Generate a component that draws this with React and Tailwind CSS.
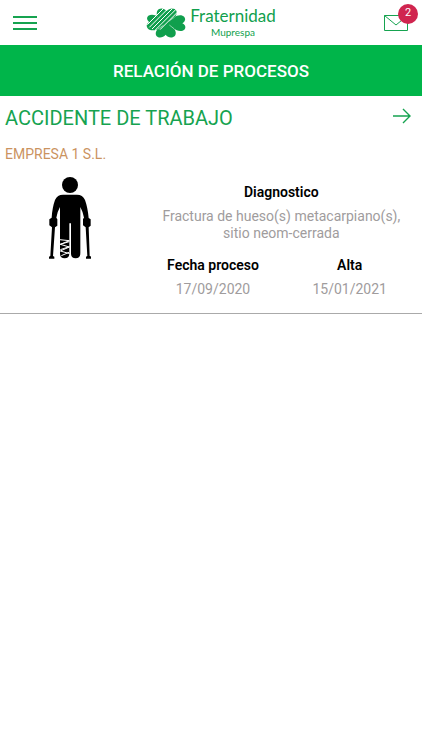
import React, { useState } from 'react';

const processes = [
  {
    id: 1,
    type: 'ACCIDENTE DE TRABAJO',
    company: 'EMPRESA 1 S.L.',
    diagnosis: 'Fractura de hueso(s) metacarpiano(s), sitio neom-cerrada',
    startDate: '17/09/2020',
    endDate: '15/01/2021',
  },
];

const CloverIcon = () => (
  <svg viewBox="0 0 120 90" className="h-[30px] w-10" aria-hidden="true">
    <g fill="#109f4d">
      <path d="M60 47 L38 30 C31 24 31 14 34 8 C39 -1 54 -1 62 9 C70 -1 87 -1 91 8 C94 15 91 23 84 30 Z" />
      <path d="M62 45 L40 60 C31 68 14 70 6 62 C-1 55 2 46 10 42 C2 37 1 28 7 23 C16 17 30 20 40 29 Z" />
      <path d="M58 45 L84 28 C94 20 109 19 115 27 C120 34 117 41 109 46 C118 50 121 59 115 65 C107 72 92 69 82 61 Z" />
      <path d="M60 43 L82 60 C90 67 91 77 87 83 C80 91 66 90 59 80 C51 90 36 91 31 83 C27 76 30 67 38 60 Z" />
    </g>
    <path
      d="M4 50 L52 2 M10 58 L66 2 M18 63 L79 2 M28 66 L92 2 M42 65 L95 12"
      stroke="#fff"
      strokeWidth="3"
      fill="none"
    />
    <path d="M70 39 L86 27 M70 51 L84 62 M52 52 L36 63" stroke="#fff" strokeWidth="1.5" fill="none" />
  </svg>
);

const CrutchesIcon = () => (
  <svg viewBox="0 0 126 246" className="h-[82px] w-[42px]" role="img" aria-label="Accidente de trabajo">
    <circle cx="63" cy="24" r="24" />
    <path d="M42 53 H84 Q101 53 108 69 Q116 91 119 123 L125 127 V146 L119 151 L122 237 L127 239 V245 H111 V239 L115 237 L110 151 L102 145 V126 L105 122 Q102 105 94 90 V228 Q94 244 80 244 Q66 244 66 229 V139 H61 V229 Q61 244 47 244 Q33 244 33 229 V90 Q24 106 22 122 L25 127 V146 L18 151 L12 237 L16 239 V245 H0 V239 L4 237 L9 151 L1 145 V127 L8 122 Q10 91 18 69 Q25 53 42 53Z" />
    <path
      d="M32 188 L61 191 L34 202 L61 210 L34 222 L62 230 M33 202 L61 194 M34 218 L61 209 M37 236 L60 226"
      stroke="#fff"
      strokeWidth="3"
      fill="none"
    />
  </svg>
);

const Header = ({ unread, onMenu }) => (
  <header className="grid h-[45px] grid-cols-3 items-center bg-white">
    <button type="button" onClick={onMenu} aria-label="Menú" className="ml-[13px] w-6 justify-self-start">
      <svg viewBox="0 0 24 16" className="h-4 w-6" stroke="#16a350" strokeWidth="1.8">
        <path d="M0 2H24M0 8H24M0 14H24" />
      </svg>
    </button>
    <div className="flex items-center gap-1 justify-self-center text-[#109f4d]">
      <CloverIcon />
      <div className="flex flex-col items-center pb-0.5 font-[Lato,sans-serif]">
        <span className="text-[17px] leading-5">Fraternidad</span>
        <span className="text-[10px] leading-3">Muprespa</span>
      </div>
    </div>
    <button type="button" aria-label="Mensajes" className="relative mr-[14px] justify-self-end">
      <svg viewBox="0 0 24 16" className="h-4 w-6" fill="none" stroke="#16a350">
        <path d="M.5 .5H23.5V15.5H.5ZM.5 .5L12 10L23.5 .5" />
      </svg>
      <span className="absolute -top-[11px] -right-[10px] flex size-5 items-center justify-center rounded-full bg-[#d0254f] text-[11px] text-white">
        {unread}
      </span>
    </button>
  </header>
);

const labelClass = 'text-sm leading-[18px] font-semibold text-black';
const valueClass = 'text-sm leading-[17px] text-[#a09c9d]';

const ProcessCard = ({ process }) => (
  <article className="border-b border-[#aaaaaa] pb-[15px]">
    <a href="#detalle" className="flex h-11 items-center justify-between pr-[10px] pl-[5px] text-[#16a350]">
      <h2 className="text-xl">{process.type}</h2>
      <svg viewBox="0 0 20 16" className="mb-1 h-4 w-5" fill="none" stroke="currentColor" strokeWidth="1.4">
        <path d="M1 8H18M11 1L18 8L11 15" />
      </svg>
    </a>
    <p className="pt-1 pl-[5px] text-sm text-[#cb935f]">{process.company}</p>
    <div className="flex pt-[13px]">
      <div className="flex w-1/3 justify-center">
        <CrutchesIcon />
      </div>
      <dl className="grid w-2/3 grid-cols-2 gap-y-[14px] px-1 pt-[6px] text-center">
        <div className="col-span-2 flex flex-col gap-[7px] px-3">
          <dt className={labelClass}>Diagnostico</dt>
          <dd className={valueClass}>{process.diagnosis}</dd>
        </div>
        <div className="flex flex-col gap-[7px]">
          <dt className={labelClass}>Fecha proceso</dt>
          <dd className={valueClass}>{process.startDate}</dd>
        </div>
        <div className="flex flex-col gap-[7px]">
          <dt className={labelClass}>Alta</dt>
          <dd className={valueClass}>{process.endDate}</dd>
        </div>
      </dl>
    </div>
  </article>
);

const App = () => {
  const [menuOpen, setMenuOpen] = useState(false);

  return (
    <div className="min-h-screen bg-white font-[Roboto,sans-serif]">
      <Header unread={2} onMenu={() => setMenuOpen(!menuOpen)} />
      <h1 className="flex h-[51px] items-center justify-center bg-[#00b54a] pt-0.5 text-[17px] font-medium text-white">
        RELACIÓN DE PROCESOS
      </h1>
      <main>
        {processes.map((process) => (
          <ProcessCard key={process.id} process={process} />
        ))}
      </main>
    </div>
  );
};

export default App;
